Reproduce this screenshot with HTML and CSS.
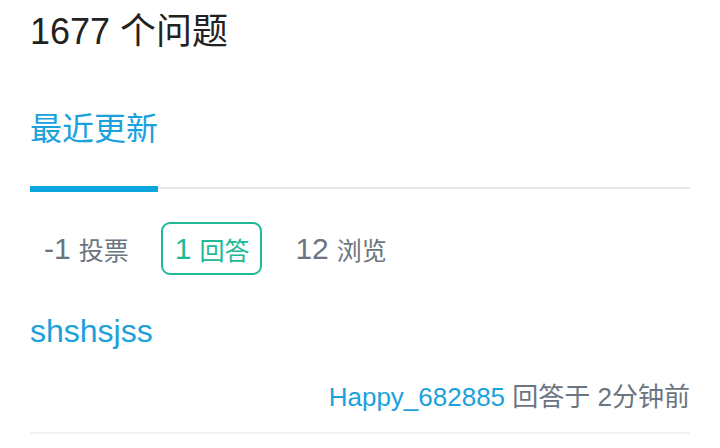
FILE: index.html
```html
<!DOCTYPE html>
<html lang="zh-CN">
<head>
    <meta charset="UTF-8">
    <meta name="viewport" content="width=device-width, initial-scale=1.0">
    <title>问题列表</title>
    <link rel="stylesheet" href="styles.css">
</head>
<body>
    <div class="page">
        <h1 class="count-title">1677 个问题</h1>

        <div class="tabs">
            <a class="tab active" href="#">最近更新</a>
        </div>

        <div class="question">
            <div class="stats">
                <div class="stat">
                    <span class="num">-1</span><span class="label">投票</span>
                </div>
                <div class="stat answered">
                    <span class="num">1</span><span class="label">回答</span>
                </div>
                <div class="stat">
                    <span class="num">12</span><span class="label">浏览</span>
                </div>
            </div>

            <a class="question-title" href="#">shshsjss</a>

            <div class="meta">
                <a class="user" href="#">Happy_682885</a> 回答于 2分钟前
            </div>
        </div>
    </div>
</body>
</html>
```

FILE: styles.css
```css
body {
    margin: 0;
    background: #fff;
    font-family: "Liberation Sans", "Noto Sans CJK SC", sans-serif;
}

.page {
    padding: 0 30px;
}

a {
    text-decoration: none;
}

.count-title {
    margin: 0;
    font-size: 36px;
    font-weight: normal;
    line-height: 64px;
    color: #222;
}

.tabs {
    display: flex;
    margin-top: 45px;
    border-bottom: 2px solid #e6e9ec;
}

.tab {
    font-size: 32px;
    line-height: 40px;
    padding-bottom: 37px;
    margin-bottom: -5px;
    color: #1ba1dc;
}

.tab.active {
    border-bottom: 6px solid #0ba6e2;
}

.question {
    padding-bottom: 17px;
    border-bottom: 2px solid #f1f4f8;
}

.stats {
    display: flex;
    align-items: center;
    margin-top: 33px;
}

.stat {
    display: flex;
    align-items: center;
    height: 49px;
    padding: 0 11px 0 12px;
    margin-right: 19px;
    border: 2px solid transparent;
    border-radius: 9px;
    color: #6b7581;
}

.stat .num {
    font-size: 30px;
}

.stat .label {
    font-size: 25px;
    margin-left: 8px;
}

.stat.answered {
    border-color: #1fb995;
    color: #1fb995;
}

.question-title {
    display: block;
    margin-top: 36px;
    font-size: 32px;
    line-height: 40px;
    color: #1ba1dc;
}

.meta {
    margin-top: 28px;
    text-align: right;
    font-size: 26px;
    line-height: 36px;
    color: #6b7581;
}

.meta .user {
    color: #1ba1dc;
}
```
